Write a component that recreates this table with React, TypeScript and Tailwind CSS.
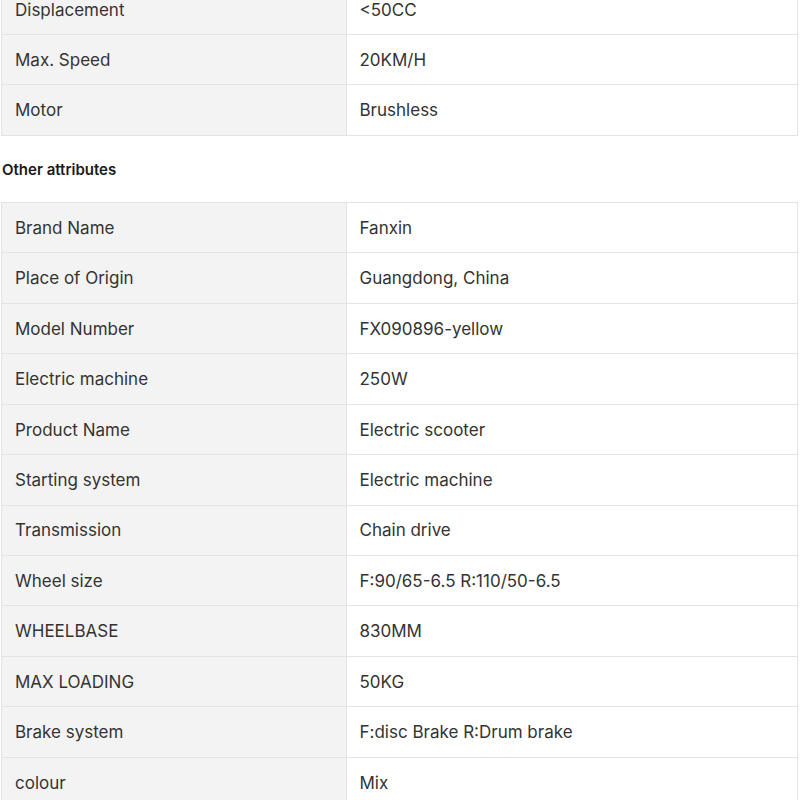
import React from "react";

const top: [string, string][] = [
  ["Displacement", "<50CC"],
  ["Max. Speed", "20KM/H"],
  ["Motor", "Brushless"],
];

const other: [string, string][] = [
  ["Brand Name", "Fanxin"],
  ["Place of Origin", "Guangdong, China"],
  ["Model Number", "FX090896-yellow"],
  ["Electric machine", "250W"],
  ["Product Name", "Electric scooter"],
  ["Starting system", "Electric machine"],
  ["Transmission", "Chain drive"],
  ["Wheel size", "F:90/65-6.5 R:110/50-6.5"],
  ["WHEELBASE", "830MM"],
  ["MAX LOADING", "50KG"],
  ["Brake system", "F:disc Brake R:Drum brake"],
  ["colour", "Mix"],
];

function Table({ rows, cutTop }: { rows: [string, string][]; cutTop?: boolean }) {
  return (
    <div
      className={
        "ml-[1px] w-[797px] border-l border-r border-[#e3e3e3] " +
        (cutTop ? "" : "border-t")
      }
    >
      {rows.map(([k, v]) => (
        <div key={k} className="flex h-[50.45px] border-b border-[#e3e3e3]">
          <div className="w-[345px] bg-[#f3f3f3] pl-[13px] pt-[2px] flex items-center border-r border-[#e3e3e3]">
            {k}
          </div>
          <div className="flex-1 bg-white pl-[12.5px] pt-[2px] flex items-center">{v}</div>
        </div>
      ))}
    </div>
  );
}

export default function App() {
  return (
    <div
      className="w-[800px] h-[800px] overflow-hidden bg-white text-[17px] text-[#333333]"
      style={{ fontFamily: "Inter, 'Noto Sans', sans-serif" }}
    >
      <div className="mt-[-15.45px]">
        <Table rows={top} cutTop />
      </div>
      <div className="mt-[24px] mb-[22px] h-[20px] leading-[20px] pl-[2px] text-[15px] font-semibold text-[#1a1a1a]">
        Other attributes
      </div>
      <Table rows={other} />
    </div>
  );
}
